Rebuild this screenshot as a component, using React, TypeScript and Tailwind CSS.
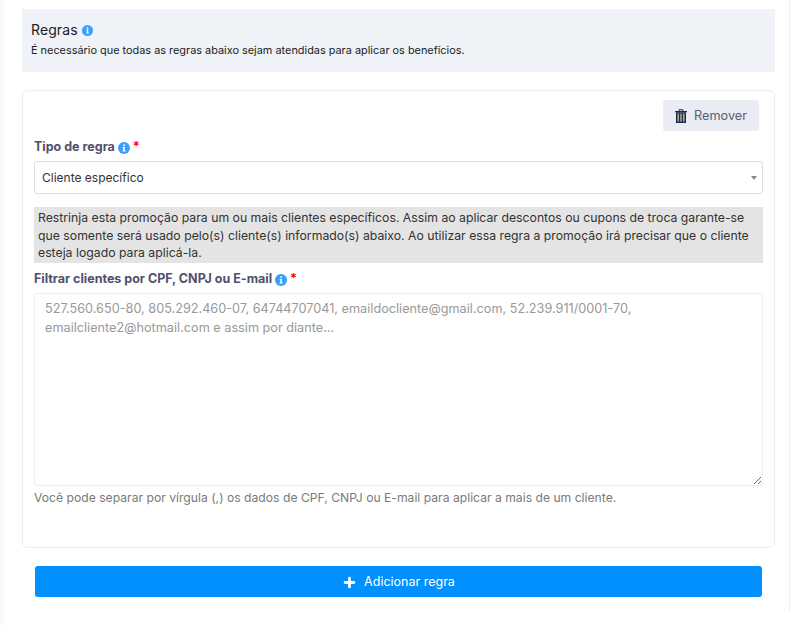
import { Plus } from "lucide-react";

function InfoDot({ size = 12 }: { size?: number }) {
  return (
    <svg width={size} height={size} viewBox="0 0 12 12" className="inline-block shrink-0">
      <circle cx="6" cy="6" r="6" fill="#3b9eff" />
      <rect x="5.2" y="2.4" width="1.7" height="1.6" fill="#fff" />
      <path d="M4.6 5h2.3v3.4h.7v1H4.5v-1h.8V6h-.7z" fill="#fff" />
    </svg>
  );
}

function TrashIcon() {
  return (
    <svg width="12" height="14" viewBox="0 0 12 14" className="shrink-0">
      <path d="M4 2V.8h4V2" fill="none" stroke="#1b2f52" strokeWidth="1" />
      <rect x="0" y="2" width="12" height="1.3" fill="#1b2f52" />
      <path d="M1 3.3h10V14H1z" fill="#1b2f52" />
      <rect x="2.6" y="4.6" width="1.2" height="8" fill="#e3c98f" />
      <rect x="5.4" y="4.6" width="1.2" height="8" fill="#e3c98f" />
      <rect x="8.2" y="4.6" width="1.2" height="8" fill="#e3c98f" />
    </svg>
  );
}

export default function App() {
  return (
    <div className="h-[625px] w-[799px] overflow-hidden bg-white flex font-['Inter',sans-serif]">
      <div className="w-1 h-full bg-[#f8f9fa]" />
      <main className="w-[786px] h-[611px] border-r border-[#eeeeee] pt-[9px] pl-[18px]">
        <section className="h-[63px] w-[753px] bg-[#eff2f6] pl-[9px] pt-[12px]">
          <h2 className="flex items-center gap-[4px] text-[14px] leading-[18px] tracking-[0.1px] text-[#222]">
            Regras <InfoDot size={11} />
          </h2>
          <p className="mt-[3px] text-[10.9px] leading-[16px] text-[#222]">
            É necessário que todas as regras abaixo sejam atendidas para aplicar os benefícios.
          </p>
        </section>

        <section className="mt-[18px] h-[458px] w-[753px] rounded-md border border-[#eeeeee] px-[11px] pt-[9px]">
          <div className="flex justify-end pr-[4px]">
            <button className="flex h-[31px] w-[96px] items-center justify-center gap-[7px] rounded-[3px] bg-[#e9ecf3] pt-[1px] text-[12.7px] text-[#5a6072]">
              <TrashIcon />
              Remover
            </button>
          </div>

          <label className="mt-[8px] flex h-[16px] items-center gap-[3px] pt-[1px] text-[12.5px] font-bold text-[#50506c]">
            Tipo de regra <InfoDot /> <span className="text-[#f00]">*</span>
          </label>
          <div className="mt-[6px] flex h-[33px] w-[729px] items-center justify-between rounded-[3px] border border-[#dddddd] pl-[7px] pr-[5px] text-[12px] text-[#333]">
            Cliente específico
            <span className="mt-[1px] h-0 w-0 border-x-[3px] border-t-[4px] border-x-transparent border-t-[#888]" />
          </div>

          <p className="mt-[13px] h-[56px] w-[729px] bg-[#e4e4e4] px-[4px] py-[2px] text-[12.25px] leading-[17.5px] text-[#333]">
            Restrinja esta promoção para um ou mais clientes específicos. Assim ao aplicar descontos ou cupons de troca garante-se
            que somente será usado pelo(s) cliente(s) informado(s) abaixo. Ao utilizar essa regra a promoção irá precisar que o cliente
            esteja logado para aplicá-la.
          </p>

          <label className="mt-[8px] flex h-[16px] items-center gap-[3px] pt-[1px] text-[12.5px] font-bold text-[#50506c]">
            Filtrar clientes por CPF, CNPJ ou E-mail <InfoDot /> <span className="text-[#f00]">*</span>
          </label>
          <textarea
            readOnly
            placeholder="527.560.650-80, 805.292.460-07, 64744707041, emaildocliente@gmail.com, 52.239.911/0001-70, emailcliente2@hotmail.com e assim por diante..."
            className="mt-[6px] block h-[193px] w-[729px] rounded-[3px] border border-[#eeeeee] px-[10px] py-[5px] text-[12.7px] leading-[19px] outline-none placeholder:text-[#999]"
          />
          <p className="mt-[4px] text-[12.17px] leading-[16px] text-[#7a7a7a]">
            Você pode separar por vírgula (,) os dados de CPF, CNPJ ou E-mail para aplicar a mais de um cliente.
          </p>
        </section>

        <div className="mt-[18px] pl-[13px]">
          <button className="flex h-[31px] w-[727px] items-center justify-center gap-[7px] rounded-[3px] bg-[#0090ff] pt-[1px] text-[12.5px] text-white">
            <Plus size={15} strokeWidth={4.5} />
            Adicionar regra
          </button>
        </div>
      </main>
    </div>
  );
}
